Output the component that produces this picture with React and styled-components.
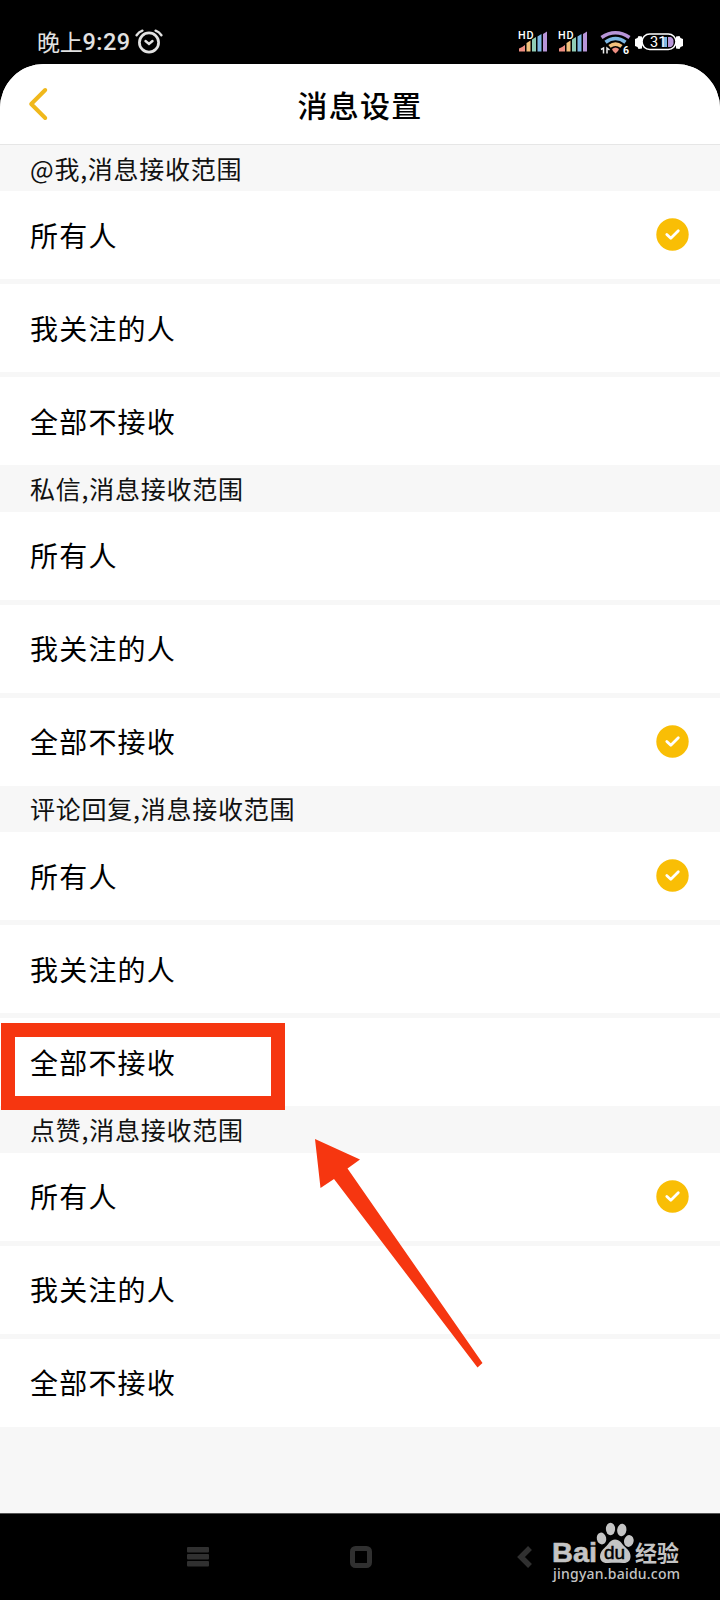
import React, {useState} from 'react';
import styled, {createGlobalStyle} from 'styled-components';

const GlobalStyle = createGlobalStyle`
    * {
        box-sizing: border-box;
    }
    body {
        margin: 0;
        background-color: #000;
        font-family: "Noto Sans CJK SC", sans-serif;
    }
`
const Phone = styled.div`
    position: relative;
    display: flex;
    flex-direction: column;
    width: 720px;
    height: 1600px;
    background-color: #000;
    overflow: hidden;
`
const StatusBar = styled.div`
    display: flex;
    justify-content: space-between;
    height: 64px;
    padding: 20px 37px 0 37px;
    color: #e2e2e2;
`
const Clock = styled.div`
    display: flex;
    align-items: center;
    height: 44px;
    font-family: Roboto, "Noto Sans CJK SC", sans-serif;
    font-size: 23.5px;
    font-weight: 500;
    white-space: nowrap;
    letter-spacing: 0.5px;

    svg {
        margin-left: 4px;
    }
`
const ClockWord = styled.span`
    margin-top: -2px;
    font-size: 23px;
    letter-spacing: -0.3px;
    font-weight: 400;
`
const SignalBox = styled.div`
    padding-top: 6px;
`
const Page = styled.main`
    display: flex;
    flex-direction: column;
    height: 1450px;
    flex-shrink: 0;
    background-color: #f7f7f7;
    border-radius: 44px 44px 0 0;
    overflow: hidden;
    border-bottom: 1px solid #555;
`
const Header = styled.header`
    display: grid;
    grid-template-columns: 80px 1fr 80px;
    align-items: center;
    height: 81px;
    flex-shrink: 0;
    background-color: #fff;
    border-bottom: 1px solid #e6e6e6;
`
const BackButton = styled.button`
    display: flex;
    padding: 0 0 0 28px;
    border: none;
    background: none;
`
const Title = styled.h1`
    margin: 0;
    font-size: 30px;
    line-height: 44px;
    font-weight: 500;
    letter-spacing: 1.2px;
    text-align: center;
    color: #000;
`
const Group = styled.section`
    display: flex;
    flex-direction: column;
    flex-shrink: 0;
`
const GroupTitle = styled.h2`
    display: flex;
    align-items: center;
    height: 46.1px;
    margin: 0;
    padding: 0 30px 1px;
    font-size: 25px;
    font-weight: 400;
    line-height: 36px;
    letter-spacing: 0.75px;
    color: #111;
`
const OptionList = styled.ul`
    display: flex;
    flex-direction: column;
    gap: 5.2px;
    margin: 0;
    padding: 0;
    list-style: none;
`
const Option = styled.li`
    display: flex;
    align-items: center;
    justify-content: space-between;
    height: 88px;
    padding: 0 31px 1px 30px;
    background-color: #fff;
    font-size: 28px;
    line-height: 40px;
    letter-spacing: 1.2px;
    color: #000;
`
const NavBar = styled.nav`
    display: flex;
    align-items: center;
    flex: 1;
    padding: 0 39px 0 187px;
`
const NavIcon = styled.svg`
    flex-shrink: 0;
    margin-right: ${props => props.$space}px;
`
const Watermark = styled.div`
    display: flex;
    flex-direction: column;
    width: 128px;
    height: 64px;
    margin-top: -10px;
    color: #c4c4c4;
`
const Frame = styled.div`
    position: absolute;
    left: 1px;
    top: 1023px;
    width: 284px;
    height: 87px;
    border: 14px solid #f63610;
`
const Arrow = styled.svg`
    position: absolute;
    left: 300px;
    top: 1120px;
`

const options = ["所有人", "我关注的人", "全部不接收"]

const groups = [
    {name: "@我,消息接收范围", selected: 0},
    {name: "私信,消息接收范围", selected: 2},
    {name: "评论回复,消息接收范围", selected: 0},
    {name: "点赞,消息接收范围", selected: 0},
]

function AlarmIcon(){
    return(
        <svg width="28" height="26" viewBox="0 0 28 26" fill="none" stroke="#e2e2e2">
            <circle cx="14" cy="13.5" r="9.6" strokeWidth="2.7" />
            <path d="M10.5 12l3.5 3 3.5-3" strokeWidth="2.4" strokeLinecap="round" />
            <path d="M1.6 6.2Q3.8 3 7.4 1.7M26.4 6.2Q24.2 3 20.6 1.7" strokeWidth="2.4" strokeLinecap="round" />
        </svg>
    )
}

function Signals(){
    const colors = ["#ef8f82", "#f3c17c", "#8fcdb6", "#7db7e3", "#b795d8"]
    return(
        <svg width="168" height="30" viewBox="515 26 168 30">
            {[519, 559].map(x => (
                <g key={x}>
                    <path d={`M${x} 51.5v-3q3-1 6-3.5v6.5z`} fill={colors[0]} />
                    <path d={`M${x + 7.5} 51.5v-8.5l4-2.5v11z`} fill={colors[1]} />
                    <path d={`M${x + 13} 51.5V39.5l4-2.5v14.5z`} fill={colors[2]} />
                    <path d={`M${x + 18.5} 51.5V36.5l4-2.500v17.5z`} fill={colors[3]} />
                    <path d={`M${x + 24} 51.5V34l4-2.5v20z`} fill={colors[4]} />
                    <text x={x - 1} y="39" fontFamily="Roboto, sans-serif" fontSize="10.8" fontWeight="500" fill="#fff" stroke="#000" strokeWidth="1.5" paintOrder="stroke" letterSpacing="0.8">HD</text>
                </g>
            ))}
            <g fill="none" strokeWidth="3.6">
                <path d="M601.5 37.5q14-9.500 28 0" stroke="#b795d8" />
                <path d="M605.5 42.2q10-7.400 20 0" stroke="#7db7e3" />
                <path d="M609.5 46.4q6-4.600 12 0" stroke="#f3c17c" />
            </g>
            <path d="M612 49q3.5-3.200 7 0q-.5 2.5-3.5 4.500q-3-2-3.500-4.500z" fill="#ef8f82" />
            <path d="M601 49.5l2.5-1.5v5.5M607 53.5v-5.5l2.5 2" fill="none" stroke="#eee" strokeWidth="1.5" />
            <text x="623" y="53.5" fontFamily="Roboto, sans-serif" fontSize="10.5" fontWeight="700" fill="#fff">6</text>
            <path d="M642 36.5l-3.5-.5-1 2-2.5 1v7l2.5 1 1 2 3.500-.5zM676 36.5l3.500-.5 1 2 2.5 1v7l-2.5 1-1 2-3.500-.5z" fill="#fff" />
            <rect x="642" y="34" width="34" height="15.5" rx="7.7" fill="#000" stroke="#fff" strokeWidth="1.6" />
            <rect x="663" y="37" width="4" height="10" fill="#7db7e3" />
            <path d="M668 37h3q3 2 2.5 5q.5 3-2.5 5h-3z" fill="#b795d8" />
            <text x="650" y="47" fontFamily="Roboto, sans-serif" fontSize="14.5" fill="#fff">31</text>
        </svg>
    )
}

function CheckIcon(){
    return(
        <svg width="33" height="33" viewBox="0 0 33 33">
            <circle cx="16.5" cy="16.5" r="16.2" fill="#f9be05" />
            <path d="M10.8 16.4l4 3.8 7.5-7.4" fill="none" stroke="#fff" strokeWidth="2.8" strokeLinecap="round" strokeLinejoin="round" />
        </svg>
    )
}

function BaiduLogo(){
    return(
        <svg width="130" height="64" viewBox="551 1520 130 64" fill="#c4c4c4">
            <text x="552" y="1561.5" fontFamily="Liberation Sans, sans-serif" fontSize="27.5" fontWeight="700" stroke="#c4c4c4" strokeWidth="0.6" textLength="45" lengthAdjust="spacingAndGlyphs">Bai</text>
            <ellipse cx="601.5" cy="1538.5" rx="4.7" ry="6" transform="rotate(-12 601.5 1538.5)" />
            <ellipse cx="610.5" cy="1529" rx="4.6" ry="6.2" />
            <ellipse cx="621.8" cy="1530" rx="4.6" ry="6.2" transform="rotate(8 621.8 1530)" />
            <ellipse cx="628.8" cy="1541" rx="4.8" ry="6" transform="rotate(12 628.8 1541)" />
            <path d="M615 1539.5c5 0 6.5 4 9 6.5c3 3 6.5 5.5 6.5 10.5c0 4.5-3 6.8-7.500 6.500c-5-.5-10-.5-15 0c-5 .5-8-2.500-8-6.500c0-5 3.500-7.500 6.500-10.500c2.500-2.500 4-6.500 8.500-6.500z" />
            <text x="604" y="1559" fontFamily="Liberation Sans, sans-serif" fontSize="19" fill="#000" stroke="#000" strokeWidth="0.5" textLength="21">du</text>
            <text x="635" y="1560.5" fontFamily="Noto Sans CJK SC, sans-serif" fontSize="22" fontWeight="700" textLength="44">经验</text>
            <text x="553" y="1579" fontFamily="Noto Sans, sans-serif" fontSize="14" fontWeight="500" textLength="127">jingyan.baidu.com</text>
        </svg>
    )
}

function App(){
    const [selected, setSelected] = useState(groups.map(g => g.selected));

    const choose = (group, option) => {
        setSelected(selected.map((s, i) => i === group ? option : s));
    }

    return(
    <>
      <GlobalStyle />
      <Phone>
        <StatusBar>
            <Clock><ClockWord>晚上</ClockWord>9:29<AlarmIcon /></Clock>
            <SignalBox><Signals /></SignalBox>
        </StatusBar>
        <Page>
            <Header>
                <BackButton aria-label="返回">
                    <svg width="22" height="34" viewBox="0 0 22 34" fill="none">
                        <path d="M17.2 3L3.2 17l14 14" stroke="#f0b81c" strokeWidth="4" strokeLinecap="round" strokeLinejoin="round" />
                    </svg>
                </BackButton>
                <Title>消息设置</Title>
            </Header>
            {groups.map((group, g) => (
                <Group key={group.name}>
                    <GroupTitle>{group.name}</GroupTitle>
                    <OptionList>
                        {options.map((option, o) => (
                            <Option key={option} onClick={() => choose(g, o)}>
                                {option}
                                {selected[g] === o && <CheckIcon />}
                            </Option>
                        ))}
                    </OptionList>
                </Group>
            ))}
        </Page>
        <NavBar>
            <NavIcon $space={141} width="22" height="20" viewBox="0 0 22 20" fill="#303030">
                <rect width="22" height="5.5" rx="1" />
                <rect y="7" width="22" height="5.5" rx="1" />
                <rect y="14" width="22" height="5.5" rx="1" />
            </NavIcon>
            <NavIcon $space={145} width="22" height="22" viewBox="0 0 22 22" fill="none">
                <rect x="2.5" y="2.5" width="17" height="17" rx="3" stroke="#303030" strokeWidth="5" />
            </NavIcon>
            <NavIcon $space={18} width="16" height="24" viewBox="0 0 16 24" fill="none">
                <path d="M13 3L4 12l9 9" stroke="#303030" strokeWidth="5.5" />
            </NavIcon>
            <Watermark><BaiduLogo /></Watermark>
        </NavBar>
        <Frame />
        <Arrow width="190" height="260" viewBox="0 0 190 260">
            <path d="M15 19L60 39.5 47.5 48.5 182.5 243 177.5 247.5 34 59 20.5 68z" fill="#f63610" />
        </Arrow>
      </Phone>
    </>
    )
}
export default App
